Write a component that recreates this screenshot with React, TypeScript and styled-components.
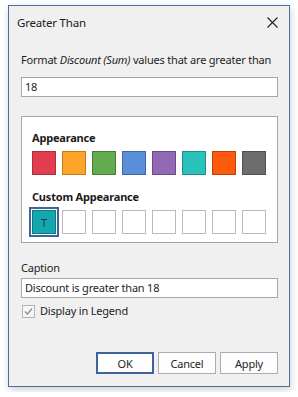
import styled, { createGlobalStyle } from "styled-components";

const GlobalStyle = createGlobalStyle`
  body {
    margin: 0;
    background: #ffffff;
    font-family: "Segoe UI", "Noto Sans", Arial, sans-serif;
    font-size: 11px;
    letter-spacing: -0.2px;
    color: #1e1e1e;
  }
`;

// fill / border pairs for the preset appearances
const presets = [
  ["#e23e4f", "#a7303c"],
  ["#fea428", "#c27c1d"],
  ["#62ab4f", "#467c39"],
  ["#598fd8", "#40689e"],
  ["#9368b4", "#6b4c84"],
  ["#2ac1bb", "#1f8d89"],
  ["#fe5a0d", "#bb420a"],
  ["#6d6d6d", "#4f4f4f"],
];

const App = () => {
  return (
    <>
      <GlobalStyle />
      <Page>
        <Dialog>
          <TitleBar>
            <Title>Greater Than</Title>
            <CloseButton>
              <svg width="11" height="11" viewBox="0 0 11 11">
                <path d="M0.5 0.5 L10.5 10.5 M10.5 0.5 L0.5 10.5" stroke="#222" strokeWidth="1.1" />
              </svg>
            </CloseButton>
          </TitleBar>
          <Content>
            <Label $top={13}>
              Format <em>Discount (Sum)</em> values that are greater than
            </Label>
            <TextBox $top={9}>18</TextBox>
            <GroupBox>
              <GroupTitle>Appearance</GroupTitle>
              <SwatchRow>
                {presets.map(([fill, border]) => (
                  <Swatch key={fill} $fill={fill} $border={border} />
                ))}
              </SwatchRow>
              <GroupTitle $top={14}>Custom Appearance</GroupTitle>
              <SwatchRow>
                <Swatch $fill="#14a7af" $border="#0e7a80" $selected>
                  T
                </Swatch>
                {Array.from({ length: 7 }).map((_, i) => (
                  <Swatch key={i} $fill="#ffffff" $border="#b9b9b9" />
                ))}
              </SwatchRow>
            </GroupBox>
            <Label $top={17}>Caption</Label>
            <TextBox $top={2}>Discount is greater than 18</TextBox>
            <CheckRow>
              <CheckBox>
                <svg width="11" height="11" viewBox="0 0 11 11">
                  <path d="M2 5.5 L4.5 8 L9 2.5" fill="none" stroke="#8a8a8a" strokeWidth="1.2" />
                </svg>
              </CheckBox>
              Display in Legend
            </CheckRow>
            <Buttons>
              <Button $primary>OK</Button>
              <Button>Cancel</Button>
              <Button>Apply</Button>
            </Buttons>
          </Content>
        </Dialog>
      </Page>
    </>
  );
};

const Page = styled.div`
  padding: 5px 8px;
`;

const Dialog = styled.div`
  box-sizing: border-box;
  width: 282px;
  height: 382px;
  background: #f0f0f0;
  border: 1px solid #4a6da7;
  box-shadow: 1px 3px 8px rgba(0, 0, 0, 0.18);
  display: flex;
  flex-direction: column;
`;

const TitleBar = styled.div`
  height: 33px;
  display: flex;
  align-items: center;
  justify-content: space-between;
  padding: 0 11px 0 8px;
`;

const Title = styled.span`
  font-size: 11.5px;
  line-height: 16px;
  color: #202020;
`;

const CloseButton = styled.div`
  width: 11px;
  height: 11px;
  display: flex;
`;

const Content = styled.div`
  padding: 0 11px 0 12px;
  display: flex;
  flex-direction: column;
`;

const Label = styled.div<{ $top: number }>`
  margin-top: ${(p) => p.$top}px;
  line-height: 16px;
  white-space: nowrap;
`;

const TextBox = styled.div<{ $top: number }>`
  box-sizing: border-box;
  margin-top: ${(p) => p.$top}px;
  height: 20px;
  border: 1px solid #a7a7a7;
  background: #ffffff;
  padding: 0 3px;
  line-height: 18px;
`;

const GroupBox = styled.div`
  box-sizing: border-box;
  margin-top: 19px;
  height: 127px;
  border: 1px solid #a7a7a7;
  background: #ffffff;
  padding: 13px 10px 0;
`;

const GroupTitle = styled.div<{ $top?: number }>`
  margin-top: ${(p) => p.$top ?? 0}px;
  line-height: 16px;
  font-weight: 700;
  color: #1a1a1a;
`;

const SwatchRow = styled.div`
  display: flex;
  gap: 6px;
  margin-top: 5px;
`;

const Swatch = styled.div<{ $fill: string; $border: string; $selected?: boolean }>`
  box-sizing: border-box;
  width: 24px;
  height: 24px;
  background: ${(p) => p.$fill};
  border: 1px solid ${(p) => p.$border};
  display: flex;
  align-items: center;
  justify-content: center;
  color: #1c3b3d;
  font-size: 11px;
  outline: ${(p) => (p.$selected ? "2px solid #40629a" : "none")};
  outline-offset: 1px;
`;

const CheckRow = styled.div`
  margin-top: 5px;
  line-height: 16px;
  display: flex;
  align-items: center;
  gap: 5px;
  padding-left: 1px;
`;

const CheckBox = styled.div`
  box-sizing: border-box;
  width: 13px;
  height: 13px;
  border: 1px solid #b3b3b3;
  background: #f7f7f7;
  display: flex;
  align-items: center;
  justify-content: center;
`;

const Buttons = styled.div`
  margin-top: 33px;
  display: flex;
  justify-content: flex-end;
  gap: 4px;
`;

const Button = styled.div<{ $primary?: boolean }>`
  box-sizing: border-box;
  width: 58px;
  height: 22px;
  background: #fdfdfd;
  border: ${(p) => (p.$primary ? "2px solid #3f629b" : "1px solid #adadad")};
  display: flex;
  align-items: center;
  justify-content: center;
  color: #1e1e1e;
`;

export default App;
